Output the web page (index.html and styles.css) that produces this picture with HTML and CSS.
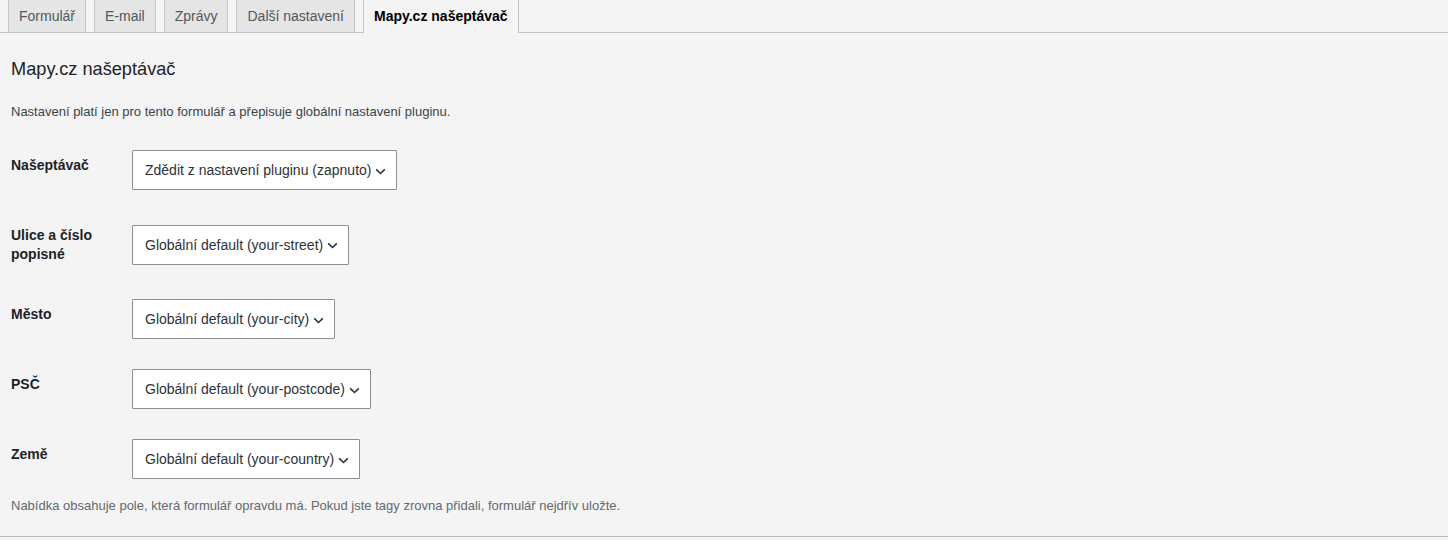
FILE: index.html
```html
<!DOCTYPE html>
<html lang="cs">
  <head>
    <meta charset="UTF-8" />
    <meta name="viewport" content="width=device-width, initial-scale=1.0" />
    <title>Mapy.cz našeptávač</title>
    <link rel="stylesheet" href="styles.css">
  </head>
  <body>
    <nav class="tabs">
      <a class="tab" href="#">Formulář</a>
      <a class="tab" href="#">E-mail</a>
      <a class="tab" href="#">Zprávy</a>
      <a class="tab" href="#">Další nastavení</a>
      <a class="tab tab-active" href="#">Mapy.cz našeptávač</a>
    </nav>

    <section class="panel">
      <h2 class="panel-title">Mapy.cz našeptávač</h2>
      <p class="panel-intro">
        Nastavení platí jen pro tento formulář a přepisuje globální nastavení pluginu.
      </p>

      <div class="fields">
        <div class="field">
          <label class="field-label">Našeptávač</label>
          <div class="field-control">
            <div class="select">
              <span>Zdědit z nastavení pluginu (zapnuto)</span>
              <svg class="chevron" width="11" height="7" viewBox="0 0 11 7"><path d="M1.2 1.4l4.3 4.1 4.3-4.1" /></svg>
            </div>
          </div>
        </div>

        <div class="field">
          <label class="field-label">Ulice a číslo popisné</label>
          <div class="field-control">
            <div class="select">
              <span>Globální default (your-street)</span>
              <svg class="chevron" width="11" height="7" viewBox="0 0 11 7"><path d="M1.2 1.4l4.3 4.1 4.3-4.1" /></svg>
            </div>
          </div>
        </div>

        <div class="field">
          <label class="field-label">Město</label>
          <div class="field-control">
            <div class="select">
              <span>Globální default (your-city)</span>
              <svg class="chevron" width="11" height="7" viewBox="0 0 11 7"><path d="M1.2 1.4l4.3 4.1 4.3-4.1" /></svg>
            </div>
          </div>
        </div>

        <div class="field">
          <label class="field-label">PSČ</label>
          <div class="field-control">
            <div class="select">
              <span>Globální default (your-postcode)</span>
              <svg class="chevron" width="11" height="7" viewBox="0 0 11 7"><path d="M1.2 1.4l4.3 4.1 4.3-4.1" /></svg>
            </div>
          </div>
        </div>

        <div class="field">
          <label class="field-label">Země</label>
          <div class="field-control">
            <div class="select">
              <span>Globální default (your-country)</span>
              <svg class="chevron" width="11" height="7" viewBox="0 0 11 7"><path d="M1.2 1.4l4.3 4.1 4.3-4.1" /></svg>
            </div>
          </div>
        </div>
      </div>

      <p class="panel-note">
        Nabídka obsahuje pole, která formulář opravdu má. Pokud jste tagy zrovna přidali, formulář nejdřív uložte.
      </p>
    </section>
  </body>
</html>
```

FILE: styles.css
```css
* {
  box-sizing: border-box;
}

body {
  margin: 0;
  background-color: #f4f4f4;
  font-family: "Liberation Sans", Arial, sans-serif;
  font-size: 14px;
  color: #1d2327;
}

/* tab strip */
.tabs {
  display: flex;
  border-bottom: 1px solid #c3c4c7;
  height: 33px;
}

.tab {
  margin-left: 8px;
  padding: 4px 10px;
  height: 32px;
  line-height: 24px;
  background-color: #e5e5e5;
  border: 1px solid #c3c4c7;
  border-top: none;
  border-bottom: none;
  color: #50575e;
  text-decoration: none;
  white-space: nowrap;
}

.tab-active {
  height: 33px;
  background-color: #f4f4f4;
  color: #000;
  font-weight: 700;
}

/* panel */
.panel {
  padding: 0 11px 21px;
  border-bottom: 1px solid #b8b8b8;
}

.panel-title {
  margin: 25px 0 0;
  font-size: 18.2px;
  line-height: 23px;
  font-weight: 400;
  color: #1d2327;
}

.panel-intro {
  margin: 21px 0 0;
  font-size: 13px;
  line-height: 19px;
  color: #3c434a;
}

.fields {
  margin-top: 14px;
}

.field {
  display: flex;
}

.field-label {
  width: 121px;
  padding: 21px 10px 20px 0;
  line-height: 19px;
  font-weight: 700;
  color: #1d2327;
}

.field-control {
  display: flex;
  align-items: center;
  padding: 15px 0;
}

.select {
  display: flex;
  align-items: center;
  gap: 4px;
  height: 40px;
  padding: 0 10px 0 12px;
  background-color: #fff;
  border: 1px solid #8c8f94;
  border-radius: 1px;
  color: #2c3338;
  white-space: nowrap;
}

.chevron {
  margin-top: 2px;
  fill: none;
  stroke: #2c3338;
  stroke-width: 1.6;
}

.panel-note {
  margin: 2px 0 0;
  font-size: 13px;
  line-height: 19px;
  color: #646970;
}
```
